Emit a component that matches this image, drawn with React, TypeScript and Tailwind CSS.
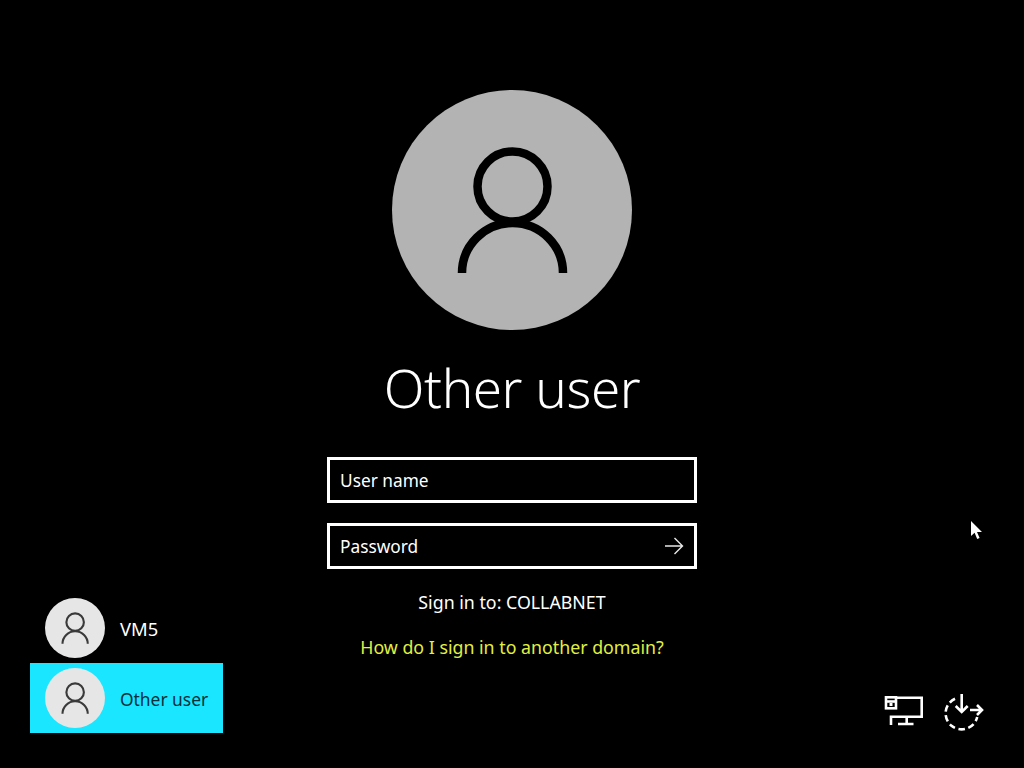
function Person({ stroke }: { stroke: string }) {
  return (
    <svg viewBox="0 0 240 240" className="h-full w-full" fill="none" stroke={stroke} strokeWidth={8.5}>
      <circle cx="120.5" cy="96.5" r="35" />
      <path d="M70 183 A50.5 50 0 0 1 171 183" />
    </svg>
  );
}

function UserRow({ name, active }: { name: string; active?: boolean }) {
  return (
    <div className={`flex h-[70px] w-[193px] items-center gap-[15px] pl-[15px] ${active ? "bg-[#1be6ff] text-[#04303c]" : "text-white"}`}>
      <div className="h-[60px] w-[60px] shrink-0 rounded-full bg-[#e6e6e6]">
        <Person stroke="#3a3a3a" />
      </div>
      <span className={`pt-[2px] ${active ? "text-[17.4px]" : "text-[18.4px]"}`}>{name}</span>
    </div>
  );
}

function Field({ label, arrow }: { label: string; arrow?: boolean }) {
  return (
    <div className="flex h-[46px] w-[370px] items-center justify-between border-[3px] border-white pl-[10px] pr-[10px] text-[17.3px] text-white">
      <span className="pt-[2px]">{label}</span>
      {arrow && (
        <svg width="20" height="18" viewBox="0 0 20 18" fill="none" stroke="#e8e8e8" strokeWidth="1.4">
          <path d="M1 9 H18.5 M10.5 1 L18.5 9 L10.5 17" />
        </svg>
      )}
    </div>
  );
}

export default function App() {
  return (
    <div className="relative flex h-[768px] w-[1024px] overflow-hidden bg-black font-['Noto_Sans','Open_Sans',sans-serif]">
      <div className="flex w-[327px] flex-col justify-end pb-[35px] pl-[30px]">
        <UserRow name="VM5" />
        <UserRow name="Other user" active />
      </div>

      <div className="flex w-[370px] flex-col items-center pt-[90px]">
        <div className="h-[240px] w-[240px] rounded-full bg-[#b3b3b3]">
          <Person stroke="#000000" />
        </div>
        <h1 className="mt-[16px] mb-[27px] h-[84px] text-[53px] font-light leading-[84px] tracking-[-0.45px] text-white">Other user</h1>
        <div className="flex flex-col gap-[20px]">
          <Field label="User name" />
          <Field label="Password" arrow />
        </div>
        <p className="mt-[19px] text-[17.8px] leading-[28px] text-white">Sign in to: COLLABNET</p>
        <p className="mt-[17px] text-[17.8px] leading-[28px] text-[#e0f040]">How do I sign in to another domain?</p>
      </div>

      <div className="flex flex-1 items-end justify-end gap-[20px] pb-[37px] pr-[40px]">
        <svg width="40" height="40" viewBox="0 0 40 40" fill="none" stroke="white" strokeWidth="2.6">
          <path d="M11 6.7 H37.7 V25.7 H7 V34 M22.7 25.7 V33 M14 33 H29.5" />
          <rect x="2" y="6.3" width="10" height="11" />
          <path d="M2 10.5 H12" />
          <rect x="5.5" y="12" width="3" height="3" fill="white" stroke="none" />
        </svg>
        <svg width="40" height="40" viewBox="0 0 40 40" fill="none" stroke="white" strokeWidth="2.6">
          <path d="M11 7.8 A16 16 0 1 0 33.2 26" strokeDasharray="6.5 3.5" />
          <path d="M17.7 3 V21 M11.7 15 L17.7 21 L23.7 15" />
          <path d="M26 19 H38 M33 14 L38 19 L33 24" />
        </svg>
      </div>

      <svg className="absolute left-[970px] top-[520px]" width="14" height="20" viewBox="0 0 14 20">
        <path d="M1 1 V16 L4.6 12.8 L7.2 19 L9.6 18 L7 12 H12 Z" fill="white" />
      </svg>
    </div>
  );
}
